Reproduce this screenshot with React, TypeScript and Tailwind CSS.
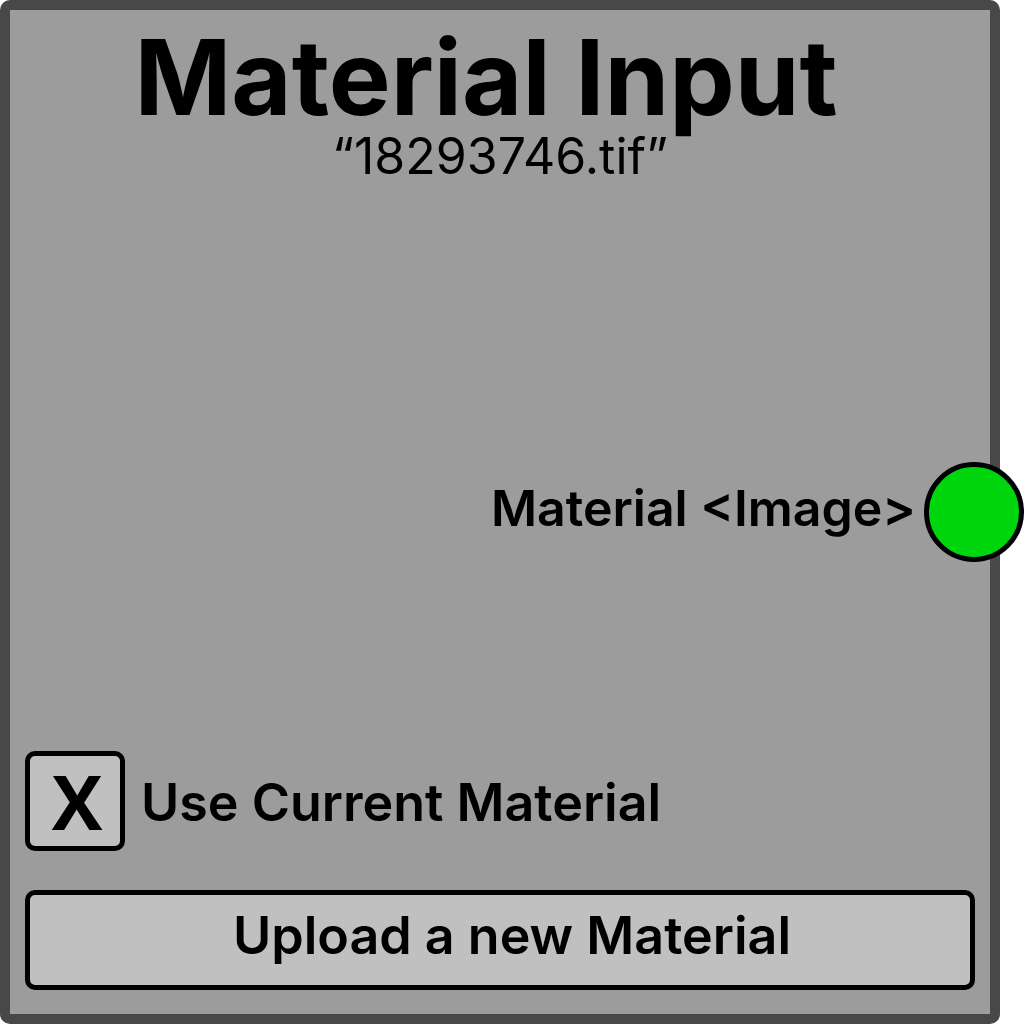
export default function App() {
  return (
    <main className="min-h-screen bg-white pr-6 font-['Inter','Open_Sans',sans-serif] text-black">
      <section className="relative flex min-h-screen flex-col rounded-[10px] border-10 border-[#484848] bg-[#9c9c9c] px-[15px] pb-6">
        <header className="flex flex-col items-center pt-4 whitespace-nowrap">
          <h1 className="pr-7 text-[104px] leading-[102px] font-bold">Material Input</h1>
          <p className="text-[50px] leading-[56px]">“18293746.tif”</p>
        </header>
        <div className="absolute top-[452px] -right-[34px] flex items-center gap-2">
          <span className="pb-2 text-[50px] font-semibold whitespace-nowrap">Material &lt;Image&gt;</span>
          <button type="button" aria-label="Material image output" className="size-[100px] rounded-full border-5 border-black bg-[#00d60e]" />
        </div>
        <div className="mt-auto flex flex-col gap-[39px]">
          <label className="flex items-center gap-4 text-[52px] font-semibold whitespace-nowrap">
            <span className="relative grid size-[100px] place-items-center rounded-[10px] border-5 border-black bg-[#c0c0c0] pl-1">
              <input type="checkbox" defaultChecked className="peer absolute inset-0 cursor-pointer appearance-none" />
              <span className="hidden font-['Open_Sans'] text-[76px] leading-none font-bold peer-checked:block">X</span>
            </span>
            <span className="pt-1">Use Current Material</span>
          </label>
          <button type="button" className="h-[100px] w-full rounded-[10px] border-5 border-black bg-[#c0c0c0] pb-2 pl-6 text-[52px] font-semibold">Upload a new Material</button>
        </div>
      </section>
    </main>
  );
}
